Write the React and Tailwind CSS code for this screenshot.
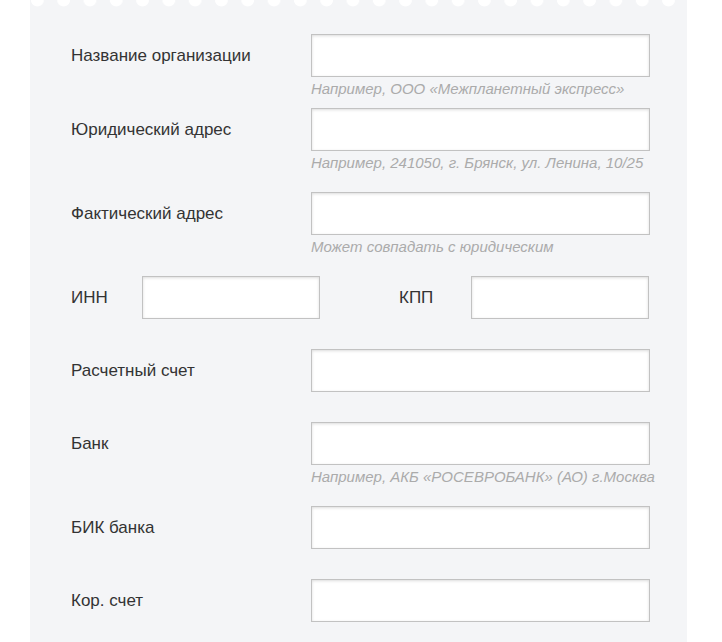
import React from "react";

const inputCls =
  "block h-[43px] bg-white border border-[#c2c2c2] shadow-[inset_0_1px_3px_rgba(0,0,0,0.14)] outline-none";

function Row({ label, hint, mt }) {
  return (
    <div className={`flex ${mt}`}>
      <div className="w-[240px] h-[43px] flex items-center text-[17px] text-[#333]">{label}</div>
      <div className="flex flex-col">
        <input className={`${inputCls} w-[339px]`} />
        {hint && (
          <div className="mt-[2px] leading-[20px] text-[15px] italic text-[#ababab] whitespace-nowrap">{hint}</div>
        )}
      </div>
    </div>
  );
}

export default function App() {
  return (
    <div className="min-h-[642px] bg-white font-['Liberation_Sans',Arial,sans-serif]">
      <div className="ml-[30px] w-[657px] min-h-[660px] bg-[#f4f5f7]">
        <div className="h-[10px] bg-[radial-gradient(circle_at_50%_0,#ffffff_6px,transparent_6.8px)] bg-[length:26.3px_10px] bg-repeat-x bg-[position:-5.8px_0]" />
        <div className="pl-[41px] pt-[24px] pb-[40px]">
          <Row label="Название организации" hint="Например, ООО «Межпланетный экспресс»" mt="" />
          <Row label="Юридический адрес" hint="Например, 241050, г. Брянск, ул. Ленина, 10/25" mt="mt-[9px]" />
          <Row label="Фактический адрес" hint="Может совпадать с юридическим" mt="mt-[19px]" />
          <div className="flex mt-[19px] items-center">
            <div className="w-[71px] text-[17px] text-[#333]">ИНН</div>
            <input className={`${inputCls} w-[178px]`} />
            <div className="ml-[79px] w-[72px] text-[17px] text-[#333]">КПП</div>
            <input className={`${inputCls} w-[178px]`} />
          </div>
          <Row label="Расчетный счет" mt="mt-[30px]" />
          <Row label="Банк" hint="Например, АКБ «РОСЕВРОБАНК» (АО) г.Москва" mt="mt-[30px]" />
          <Row label="БИК банка" mt="mt-[19px]" />
          <Row label="Кор. счет" mt="mt-[30px]" />
        </div>
      </div>
    </div>
  );
}
